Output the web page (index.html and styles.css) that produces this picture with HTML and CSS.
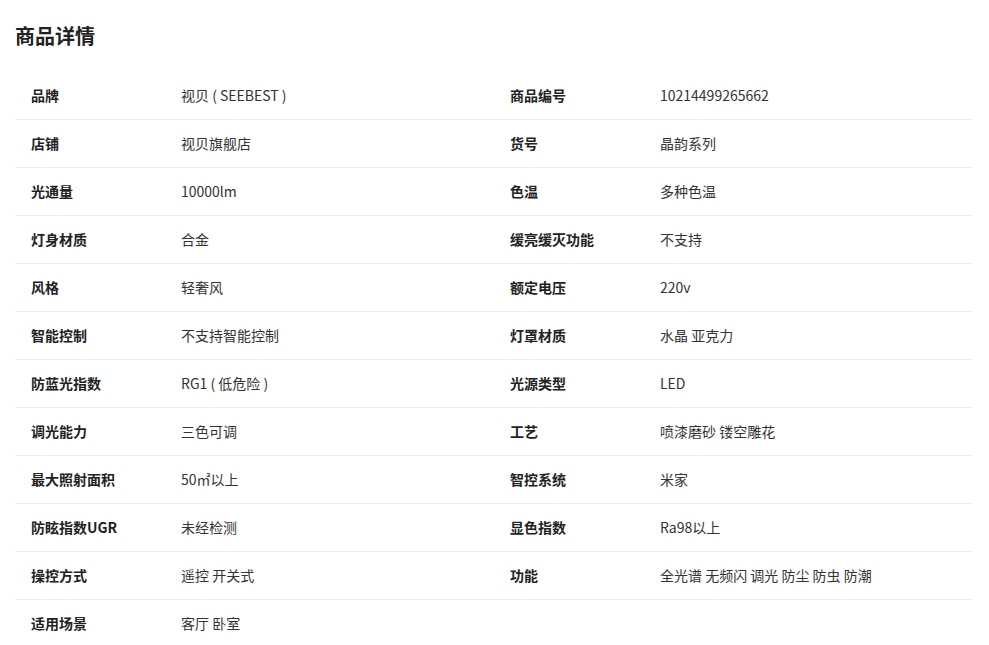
FILE: index.html
```html
<!DOCTYPE html>
<html lang="zh-CN">
<head>
<meta charset="utf-8">
<title>商品详情</title>
<link rel="stylesheet" href="styles.css">
</head>
<body>
<div class="page">
  <h2 class="title">商品详情</h2>
  <div class="specs">
    <div class="row"><div class="k">品牌</div><div class="v">视贝 ( SEEBEST )</div><div class="k">商品编号</div><div class="v">10214499265662</div></div>
    <div class="row"><div class="k">店铺</div><div class="v">视贝旗舰店</div><div class="k">货号</div><div class="v">晶韵系列</div></div>
    <div class="row"><div class="k">光通量</div><div class="v">10000lm</div><div class="k">色温</div><div class="v">多种色温</div></div>
    <div class="row"><div class="k">灯身材质</div><div class="v">合金</div><div class="k">缓亮缓灭功能</div><div class="v">不支持</div></div>
    <div class="row"><div class="k">风格</div><div class="v">轻奢风</div><div class="k">额定电压</div><div class="v">220v</div></div>
    <div class="row"><div class="k">智能控制</div><div class="v">不支持智能控制</div><div class="k">灯罩材质</div><div class="v">水晶 亚克力</div></div>
    <div class="row"><div class="k">防蓝光指数</div><div class="v">RG1 ( 低危险 )</div><div class="k">光源类型</div><div class="v">LED</div></div>
    <div class="row"><div class="k">调光能力</div><div class="v">三色可调</div><div class="k">工艺</div><div class="v">喷漆磨砂 镂空雕花</div></div>
    <div class="row"><div class="k">最大照射面积</div><div class="v">50㎡以上</div><div class="k">智控系统</div><div class="v">米家</div></div>
    <div class="row"><div class="k">防眩指数UGR</div><div class="v">未经检测</div><div class="k">显色指数</div><div class="v">Ra98以上</div></div>
    <div class="row"><div class="k">操控方式</div><div class="v">遥控 开关式</div><div class="k">功能</div><div class="v">全光谱 无频闪 调光 防尘 防虫 防潮</div></div>
    <div class="row last"><div class="k">适用场景</div><div class="v">客厅 卧室</div><div class="k"></div><div class="v"></div></div>
  </div>
</div>
</body>
</html>
```
FILE: styles.css
```css
html, body {
  margin: 0;
  padding: 0;
  background: #fff;
}
body {
  font-family: "Microsoft YaHei", "Noto Sans CJK SC", "Noto Sans", sans-serif;
  color: #333;
  font-size: 14px;
}
.page {
  padding: 0 16px 0 15px;
}
.title {
  margin: 0;
  padding-top: 22px;
  height: 72px;
  box-sizing: border-box;
  font-size: 20px;
  line-height: 28px;
  font-weight: bold;
  color: #222;
}
.specs {
  display: flex;
  flex-direction: column;
}
.row {
  display: grid;
  grid-template-columns: 150px 329px 150px 329px;
  height: 48px;
  border-bottom: 1px solid #eee;
  box-sizing: border-box;
  align-items: center;
}
.row.last {
  border-bottom: none;
}
.k, .v {
  padding-left: 16px;
  padding-bottom: 2px;
  line-height: 20px;
  white-space: nowrap;
}
.k {
  font-weight: bold;
  color: #222;
}
.v {
  color: #333;
}
```
